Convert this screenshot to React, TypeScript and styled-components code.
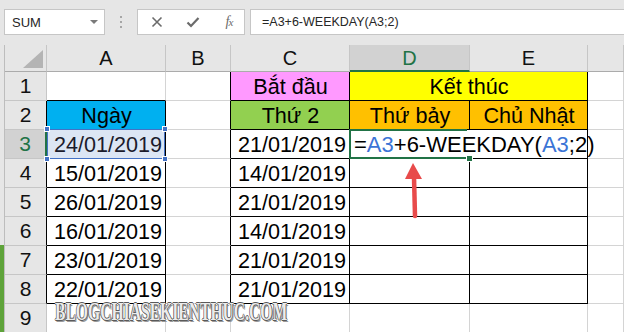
import React from "react";
import styled, { createGlobalStyle } from "styled-components";

const GlobalStyle = createGlobalStyle`
  html, body {
    margin: 0;
    padding: 0;
    background: #e6e6e6;
  }
  body {
    font-family: "Liberation Sans", Arial, sans-serif;
  }
`;

const Screen = styled.div`
  position: relative;
  width: 624px;
  height: 332px;
  overflow: hidden;
  background: #e6e6e6;
  display: flex;
  flex-direction: column;
`;

/* ---------- formula bar ---------- */

const Toolbar = styled.div`
  height: 45px;
  flex: none;
  display: flex;
  align-items: flex-start;
  padding: 9px 0 0 4px;
  box-sizing: border-box;
`;

const NameBox = styled.div`
  width: 101px;
  height: 26px;
  box-sizing: border-box;
  background: #fff;
  border: 1px solid #c6c6c6;
  display: flex;
  align-items: center;
  justify-content: space-between;
  padding: 0 6px 0 7px;
  font-size: 13px;
  color: #262626;
`;

const Caret = styled.span`
  width: 0;
  height: 0;
  border-left: 4px solid transparent;
  border-right: 4px solid transparent;
  border-top: 4px solid #7a7a7a;
`;

const Grip = styled.div`
  width: 32px;
  height: 26px;
  display: flex;
  flex-direction: column;
  align-items: center;
  justify-content: center;
  gap: 3px;

  span {
    width: 2px;
    height: 2px;
    background: #a6a6a6;
  }
`;

const ButtonBox = styled.div`
  width: 108px;
  height: 26px;
  box-sizing: border-box;
  background: #fff;
  border: 1px solid #c6c6c6;
  display: flex;
  align-items: center;
  padding-left: 10px;
  gap: 18px;
`;

const IconSlot = styled.span`
  width: 18px;
  height: 18px;
  display: flex;
  align-items: center;
  justify-content: center;
  color: #6b6b6b;
`;

const Fx = styled.span`
  font-family: "Liberation Serif", "Times New Roman", serif;
  font-style: italic;
  font-size: 14px;
  color: #6b6b6b;
  letter-spacing: -1px;

  small {
    font-size: 11px;
  }
`;

const FormulaBox = styled.div`
  flex: 1;
  margin-left: 5px;
  height: 26px;
  box-sizing: border-box;
  background: #fff;
  border: 1px solid #c6c6c6;
  border-right: none;
  display: flex;
  align-items: center;
  padding-left: 11px;
  font-size: 12.5px;
  color: #262626;
`;

/* ---------- sheet ---------- */

const Sheet = styled.div`
  flex: 1;
  display: flex;
  min-height: 0;
`;

const LeftStrip = styled.div`
  width: 4px;
  flex: none;
  border-right: 1px solid #bdbdbd;
  display: flex;
  flex-direction: column;
  justify-content: flex-end;
`;

const StripTab = styled.div`
  height: 87px;
  background: #5ea33a;
`;

const Grid = styled.div`
  flex: 1;
  display: grid;
  grid-template-columns: 42px 119px 65px 119px 120px 118px 1fr;
  grid-template-rows: 27px repeat(9, 29px);
  background: #fff;
`;

const Corner = styled.div`
  background: #e6e6e6;
  border-right: 1px solid #c6c6c6;
  border-bottom: 1px solid #ababab;
  display: flex;
  align-items: flex-end;
  justify-content: flex-end;
  padding: 0 3px 3px 0;
  box-sizing: border-box;

  &::after {
    content: "";
    width: 0;
    height: 0;
    border-left: 20px solid transparent;
    border-bottom: 18px solid #b4b4b4;
  }
`;

const ColHead = styled.div<{ $active?: boolean }>`
  background: ${(p) => (p.$active ? "#d2d2d2" : "#e6e6e6")};
  color: ${(p) => (p.$active ? "#217346" : "#111")};
  border-right: 1px solid #c6c6c6;
  border-bottom: ${(p) => (p.$active ? "2px solid #217346" : "1px solid #ababab")};
  box-sizing: border-box;
  display: flex;
  align-items: center;
  justify-content: center;
  font-size: 20px;
  padding-top: 1px;
`;

const RowHead = styled.div<{ $active?: boolean; $edge: string }>`
  background: ${(p) => (p.$active ? "#d2d2d2" : "#e6e6e6")};
  color: ${(p) => (p.$active ? "#217346" : "#111")};
  border-right: ${(p) => (p.$active ? "2px" : "1px")} solid ${(p) => p.$edge};
  border-bottom: 1px solid #c6c6c6;
  box-sizing: border-box;
  display: flex;
  align-items: center;
  justify-content: center;
  font-size: 21px;
`;

const Cell = styled.div<{
  $bg?: string;
  $right: string;
  $bottom: string;
  $align?: "center" | "right" | "left";
  $span?: number;
}>`
  position: relative;
  grid-column: span ${(p) => p.$span || 1};
  background: ${(p) => p.$bg || "#fff"};
  border-right: 1px solid ${(p) => p.$right};
  border-bottom: 1px solid ${(p) => p.$bottom};
  box-sizing: border-box;
  display: flex;
  align-items: center;
  justify-content: ${(p) =>
    p.$align === "center" ? "center" : p.$align === "right" ? "flex-end" : "flex-start"};
  padding: 2px 3px 0 4px;
  font-size: 21.6px;
  color: #000;
  white-space: nowrap;
`;

const SelectedCell = styled(Cell)`
  color: #1b1b2b;

  &::after {
    content: "";
    position: absolute;
    inset: -1px 0 -1px 0;
    border: 1.5px solid #4472c4;
    pointer-events: none;
  }
`;

const Handle = styled.span<{ $top?: boolean; $left?: boolean }>`
  position: absolute;
  width: 4px;
  height: 4px;
  background: #4472c4;
  border: 1px solid #fff;
  z-index: 2;
  ${(p) => (p.$top ? "top: -4px;" : "bottom: -4px;")}
  ${(p) => (p.$left ? "left: -3px;" : "right: -3px;")}
`;

const EditCell = styled(Cell)`
  z-index: 1;
  overflow: visible;
  font-size: 22px;

  &::after {
    content: "";
    position: absolute;
    top: -1px;
    left: -1px;
    right: 2px;
    bottom: -1px;
    border: 2px solid #217346;
    border-right: none;
    pointer-events: none;
  }
`;

const FillHandle = styled.span`
  position: absolute;
  right: -4px;
  bottom: -4px;
  width: 5px;
  height: 5px;
  background: #217346;
  border: 1px solid #fff;
  z-index: 2;
`;

const Ref = styled.span`
  color: #3b74d6;
`;

/* ---------- overlays ---------- */

const Watermark = styled.div`
  position: absolute;
  left: 55px;
  top: 303px;
  font-family: "Liberation Serif", "Times New Roman", serif;
  font-weight: bold;
  font-size: 25px;
  line-height: 18px;
  color: #ececec;
  transform: scaleX(0.625);
  transform-origin: left top;
  white-space: nowrap;
  text-shadow:
    1px 0 #5a5a5a,
    -1px 0 #5a5a5a,
    0 1px #5a5a5a,
    0 -1px #5a5a5a,
    2px 2px #9a9a9a;
  pointer-events: none;
`;

const ArrowSvg = styled.svg`
  position: absolute;
  left: 403px;
  top: 160px;
  pointer-events: none;
`;

/* ---------- data ---------- */

type CellDef = {
  text?: React.ReactNode;
  bg?: string;
  align?: "center" | "right" | "left";
  span?: number;
  kind?: "sel" | "edit";
};

const COLS = ["A", "B", "C", "D", "E", ""];

const formula = (
  <>
    =<Ref>A3</Ref>+6-WEEKDAY(<Ref>A3</Ref>;2)
  </>
);

const dates: [string, string][] = [
  ["15/01/2019", "14/01/2019"],
  ["26/01/2019", "21/01/2019"],
  ["16/01/2019", "14/01/2019"],
  ["23/01/2019", "21/01/2019"],
  ["22/01/2019", "21/01/2019"],
];

const rows: (CellDef | null)[][] = [
  [
    {},
    {},
    { text: "Bắt đầu", bg: "#ff99ff", align: "center" },
    { text: "Kết thúc", bg: "#ffff00", align: "center", span: 2 },
    null,
    {},
  ],
  [
    { text: "Ngày", bg: "#00b0f0", align: "center" },
    {},
    { text: "Thứ 2", bg: "#92d050", align: "center" },
    { text: "Thứ bảy", bg: "#ffc000", align: "center" },
    { text: "Chủ Nhật", bg: "#ffc000", align: "center" },
    {},
  ],
  [
    { text: "24/01/2019", bg: "#dce6f4", align: "right", kind: "sel" },
    {},
    { text: "21/01/2019", align: "right" },
    { text: formula, kind: "edit" },
    {},
    {},
  ],
  ...dates.map(([a, c]) => [
    { text: a, align: "right" as const },
    {},
    { text: c, align: "right" as const },
    {},
    {},
    {},
  ]),
  [{}, {}, {}, {}, {}, {}],
];

const boxed = (r: number, c: number) =>
  (c === 0 && r >= 2 && r <= 8) || (c >= 2 && c <= 4 && r >= 1 && r <= 8);

const GRID = "#d4d4d4";
const INK = "#000";

const XIcon = () => (
  <svg width="12" height="12" viewBox="0 0 12 12">
    <path d="M1.5 1.5 L10.5 10.5 M10.5 1.5 L1.5 10.5" stroke="#6b6b6b" strokeWidth="1.6" />
  </svg>
);

const CheckIcon = () => (
  <svg width="14" height="12" viewBox="0 0 14 12">
    <path d="M1.5 6.5 L5 10 L12.5 2" stroke="#6b6b6b" strokeWidth="2.2" fill="none" />
  </svg>
);

export default function App() {
  return (
    <Screen>
      <GlobalStyle />
      <Toolbar>
        <NameBox>
          SUM
          <Caret />
        </NameBox>
        <Grip>
          <span />
          <span />
          <span />
        </Grip>
        <ButtonBox>
          <IconSlot>
            <XIcon />
          </IconSlot>
          <IconSlot>
            <CheckIcon />
          </IconSlot>
          <IconSlot>
            <Fx>
              f<small>x</small>
            </Fx>
          </IconSlot>
        </ButtonBox>
        <FormulaBox>=A3+6-WEEKDAY(A3;2)</FormulaBox>
      </Toolbar>

      <Sheet>
        <LeftStrip>
          <StripTab />
        </LeftStrip>
        <Grid>
          <Corner />
          {COLS.map((c, i) => (
            <ColHead key={i} $active={c === "D"}>
              {c}
            </ColHead>
          ))}
          {rows.map((row, ri) => {
            const r = ri + 1;
            const headEdge = r === 3 ? "#217346" : boxed(r, 0) ? INK : "#c6c6c6";
            return (
              <React.Fragment key={r}>
                <RowHead $active={r === 3} $edge={headEdge}>
                  {r}
                </RowHead>
                {row.map((cell, c) => {
                  if (!cell) return null;
                  const end = c + (cell.span || 1) - 1;
                  let right = boxed(r, end) || boxed(r, end + 1) ? INK : GRID;
                  const bottom = boxed(r, c) || boxed(r + 1, c) ? INK : GRID;
                  if (cell.kind === "edit") right = "#fff";
                  const props = {
                    $bg: cell.bg,
                    $right: right,
                    $bottom: bottom,
                    $align: cell.align,
                    $span: cell.span,
                  };
                  if (cell.kind === "sel")
                    return (
                      <SelectedCell key={c} {...props}>
                        {cell.text}
                        <Handle $top $left />
                        <Handle $top />
                        <Handle $left />
                        <Handle />
                      </SelectedCell>
                    );
                  if (cell.kind === "edit")
                    return (
                      <EditCell key={c} {...props}>
                        {cell.text}
                        <FillHandle />
                      </EditCell>
                    );
                  return (
                    <Cell key={c} {...props}>
                      {cell.text}
                    </Cell>
                  );
                })}
              </React.Fragment>
            );
          })}
        </Grid>
      </Sheet>

      <ArrowSvg width="22" height="62" viewBox="0 0 22 62">
        <path d="M11 17 L12 56" stroke="#e84b4b" strokeWidth="4.5" strokeLinecap="round" />
        <polygon points="10,3 2,19 19,19" fill="#e84b4b" />
      </ArrowSvg>

      <Watermark>BLOGCHIASEKIENTHUC.COM</Watermark>
    </Screen>
  );
}
